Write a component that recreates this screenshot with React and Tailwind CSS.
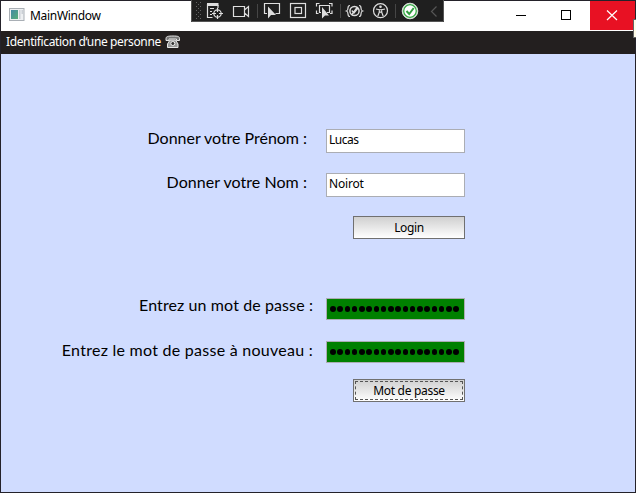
const DOTS = Array.from({ length: 18 }, (_, i) => i);

function Row({ label, gap, tracking, children }) {
  return (
    <div className="flex w-[464px] items-start justify-end">
      <label
        className={`whitespace-nowrap font-['Lato','Liberation_Sans',sans-serif] text-[16px] leading-[20px] text-black ${gap} ${tracking}`}
      >
        {label}
      </label>
      {children}
    </div>
  );
}

function TextBox({ value, tracking }) {
  return (
    <div className={`h-6 w-[139px] shrink-0 border border-[#abadb3] bg-white pl-[2px] text-[12px] leading-[19px] ${tracking}`}>
      {value}
    </div>
  );
}

function PasswordBox() {
  return (
    <div className="flex h-[22px] w-[139px] shrink-0 items-start gap-[1.76px] border border-[#abadb3] bg-[#008000] pt-[7px] pl-[3px]">
      {DOTS.map((i) => (
        <span key={i} className="size-[5.5px] shrink-0 rounded-full bg-black" />
      ))}
    </div>
  );
}

function Toolbar() {
  return (
    <svg
      className="absolute top-0 left-[191px]"
      width="253"
      height="22"
      viewBox="0 0 253 22"
      fill="none"
      stroke="#dedede"
      strokeWidth="1.2"
    >
      <rect width="253" height="22" fill="#1f1f1f" stroke="none" />
      <path d="M.5 0v21.5h252V0" stroke="#555" strokeWidth="1" />
      <path d="M5.5 2v18M9.5 2v18" stroke="#646464" strokeWidth="1" strokeDasharray="1 3" />
      <path d="M7.5 4v15" stroke="#646464" strokeWidth="1" strokeDasharray="1 3" />
      <path d="M16 4.500h11.500" strokeWidth="3" />
      <path d="M16.500 4v13.500h5M27 5v3" />
      <path d="M19 8.500h4M19 11.500h2M19 14.500h2" />
      <circle cx="26.500" cy="13.500" r="3.700" />
      <path d="M26.500 8v4M26.500 15v4M21 13.500h4M28 13.500h4" />
      <path d="M42.500 6.500h11v10h-11zM53.500 10l4-3.500v10l-4-3.500" />
      <path d="M66.500 4v14M149.500 4v14M204.500 4v14" stroke="#464646" strokeWidth="1" />
      <path d="M76 13.500h-2.500v-10h15v10h-4" />
      <path d="M77 6.500v12l3-3.500h5z" fill="#dedede" stroke="none" />
      <rect x="99.500" y="3.500" width="15" height="14" />
      <rect x="104" y="7.500" width="6.500" height="6" />
      <path d="M125.500 6.500V3.500h3M138 3.500h3v3M125.500 10.500v3h2M139 13.500h2v-3" />
      <path d="M130 12.500h-1.500v-7h10v7H136" />
      <path d="M131 7v11.500l3-3h4z" fill="#dedede" stroke="none" />
      <path d="M159 5.500c-2 0-2 1-2 2.500s0 2.500-1.500 3c1.500.5 1.500 1.500 1.500 3s0 2.500 2 2.500M168 5.500c2 0 2 1 2 2.500s0 2.500 1.500 3c-1.500.5-1.500 1.500-1.500 3s0 2.500-2 2.500" />
      <circle cx="163.500" cy="11" r="4.600" strokeWidth="1.500" />
      <path d="m160.800 10.500 2.200 2.500 4-5M160.500 15l6-8" strokeWidth="1.300" />
      <circle cx="189.500" cy="10.700" r="7" />
      <circle cx="189.500" cy="6.800" r="1.300" fill="#dedede" stroke="none" />
      <path d="M185 9c3 1 6 1 9 0M188.300 9.700v2.500l-1.500 4M190.700 9.700v2.500l1.500 4M188.300 12.200h2.400" />
      <circle cx="219" cy="11" r="7.800" fill="#fff" stroke="#d4ddd4" strokeWidth="1" />
      <circle cx="219" cy="11" r="6.300" stroke="#36a944" strokeWidth="1.300" />
      <path d="m215.500 11 2.700 3 4.500-6" stroke="#329e40" strokeWidth="2" />
      <path d="m245.500 6.500-5 5 5 5" stroke="#565656" />
    </svg>
  );
}

export default function App() {
  return (
    <div className="relative h-[493px] w-[636px] overflow-hidden">
      <div className="flex h-full flex-col border border-[#24222a] bg-[#d0dcff] font-['Noto_Sans','Open_Sans',sans-serif] text-[12px] text-black">
        <header className="flex h-[30px] shrink-0 items-start bg-white">
          <svg className="mt-[7px] ml-2" width="16" height="14" viewBox="0 0 16 14">
            <defs>
              <linearGradient id="app" x2="1" y2="1">
                <stop stopColor="#4389a5" />
                <stop offset="1" stopColor="#57ae79" />
              </linearGradient>
            </defs>
            <rect x=".5" y=".5" width="14.500" height="12" fill="#eef0f2" stroke="#a9afb5" />
            <rect x="2" y="2" width="7" height="9" fill="url(#app)" />
            <path d="M10 2h1.500v9H10zM12.500 2H14v4h-1.500z" fill="#cbd0d6" />
          </svg>
          <span className="ml-[5px] text-[12px] leading-[29px] tracking-[-0.3px]">MainWindow</span>
          <div className="ml-auto flex">
            <svg width="90" height="29" viewBox="0 0 90 29" fill="none" stroke="#000">
              <path d="M16 14.500h10" />
              <rect x="61.500" y="9.500" width="9" height="9" />
            </svg>
            <div className="h-[29px] w-[45px] bg-[#e81123]">
              <svg width="45" height="29" viewBox="0 0 45 29" stroke="#fff" strokeWidth="1.200">
                <path d="m17 9.500 10 9.500M27 9.500 17 19" />
              </svg>
            </div>
          </div>
        </header>

        <div className="flex h-[23px] shrink-0 items-start bg-[#231f1f] pl-[5px] text-white">
          <span className="text-[12px] leading-[22px] tracking-[-0.37px]">Identification d‘une personne</span>
          <svg className="mt-1 ml-1" width="16" height="14" viewBox="0 0 16 14">
            <path
              d="M1 5.500V3.500C1 1.500 3 1 8 1s6.500.5 6.500 2.500v2h-3V4H4v1.500z"
              fill="#777"
              stroke="#e6e6e6"
            />
            <path d="M5 5h5.500l2.500 4v3.500H2.500V9z" fill="#999" stroke="#e6e6e6" />
            <circle cx="7.800" cy="8.500" r="2" fill="#333" stroke="#eee" />
          </svg>
        </div>

        <main className="flex flex-col pt-[75px]">
          <Row label="Donner votre Prénom :" gap="mr-[19px] -mt-px" tracking="tracking-[-0.03px]">
            <TextBox value="Lucas" tracking="tracking-[-0.5px]" />
          </Row>
          <div className="h-5" />
          <Row label="Donner votre Nom :" gap="mr-[19px] -mt-px" tracking="tracking-[0.04px]">
            <TextBox value="Noirot" tracking="tracking-[-0.2px]" />
          </Row>
          <div className="flex w-[464px] justify-end pt-[19px]">
            <button className="h-[23px] w-[112px] border border-[#707070] bg-linear-to-b from-[#d0d0d0] to-white text-[12px] leading-[21px] tracking-[-0.35px]">
              Login
            </button>
          </div>
          <div className="h-[59px]" />
          <Row label="Entrez un mot de passe :" gap="mr-[13px] -mt-[3px]" tracking="tracking-[0.1px]">
            <PasswordBox />
          </Row>
          <div className="h-[21px]" />
          <Row label="Entrez le mot de passe à nouveau :" gap="mr-[13px] -mt-px" tracking="tracking-[0.26px]">
            <PasswordBox />
          </Row>
          <div className="flex w-[464px] justify-end pt-4">
            <button className="h-[23px] w-[112px] border border-[#707070] bg-linear-to-b from-[#d0d0d0] to-white p-px text-[12px] leading-[17px] tracking-[-0.3px]">
              <span className="block border border-dashed border-[#555]">Mot de passe</span>
            </button>
          </div>
        </main>
      </div>

      <Toolbar />
      <div className="absolute top-[19px] right-0 h-[19px] w-[3px] border border-r-0 border-[#646464] bg-[#fffce8]" />
    </div>
  );
}
